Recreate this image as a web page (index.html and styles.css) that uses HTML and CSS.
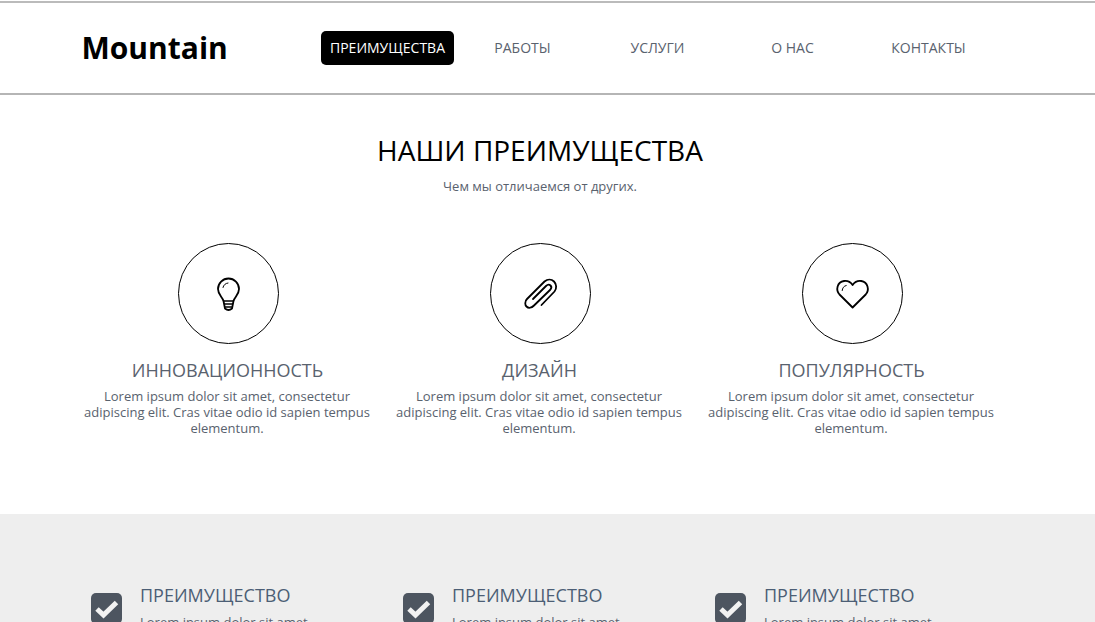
FILE: index.html
```html
<!DOCTYPE html>
<html lang="ru">
<head>
  <meta charset="UTF-8">
  <meta name="viewport" content="width=device-width, initial-scale=1.0">
  <title>Mountain</title>
  <link rel="stylesheet" href="styles.css">
</head>
<body>
  <header class="header">
    <div class="header-inner">
      <a href="#" class="logo">Mountain</a>
      <nav class="nav">
        <a href="#" class="nav-link active">ПРЕИМУЩЕСТВА</a>
        <a href="#" class="nav-link">РАБОТЫ</a>
        <a href="#" class="nav-link">УСЛУГИ</a>
        <a href="#" class="nav-link">О НАС</a>
        <a href="#" class="nav-link">КОНТАКТЫ</a>
      </nav>
    </div>
  </header>

  <section class="about">
    <h1 class="about-title">НАШИ ПРЕИМУЩЕСТВА</h1>
    <p class="about-sub">Чем мы отличаемся от других.</p>
    <div class="cols">
      <div class="col">
        <div class="circle">
          <svg class="icon" width="40" height="40" viewBox="0 0 40 40" fill="none" stroke="#000" stroke-width="1.800" stroke-linecap="round" stroke-linejoin="round">
            <path d="M15.500 27 C14.500 23 10 21 10 15 A10.500 10.500 0 0 1 31 15 C31 21 26.500 23 25.500 27 L24 34.500 Q20.500 37.500 17 34.500 Z"/>
            <path d="M15.500 27 H25.500 M16.500 30 H24.500 M17.500 33 H23.500" stroke-width="1.300"/>
            <path d="M15 13.500 C15.500 11 17.500 9.300 20 9" stroke-width="1"/>
          </svg>
        </div>
        <h3 class="col-title">ИННОВАЦИОННОСТЬ</h3>
        <p class="col-text">Lorem ipsum dolor sit amet, consectetur adipiscing elit. Cras vitae odio id sapien tempus elementum.</p>
      </div>
      <div class="col">
        <div class="circle">
          <svg class="icon" width="40" height="40" viewBox="0 0 40 40" fill="none" stroke="#000" stroke-width="1.800" stroke-linecap="round" stroke-linejoin="round">
            <path d="M21.500 31 L34.500 17.500 C37 14.500 36.500 10 34 7.500 C31.500 5 27.500 5 24.500 7.500 L7 25 C4.500 27.500 5 31 6.500 32.500 C8.500 34.500 11.500 34 14 31.500 L30 16 C31.500 14.500 31.500 12.500 30.500 11.500 C29.500 10.500 27.500 10.500 26 12 L13 25"/>
          </svg>
        </div>
        <h3 class="col-title">ДИЗАЙН</h3>
        <p class="col-text">Lorem ipsum dolor sit amet, consectetur adipiscing elit. Cras vitae odio id sapien tempus elementum.</p>
      </div>
      <div class="col">
        <div class="circle">
          <svg class="icon" width="40" height="40" viewBox="0 0 40 40" fill="none" stroke="#000" stroke-width="1.800" stroke-linecap="round" stroke-linejoin="round">
            <path d="M20.600 33.500 L7.500 20.500 C3.500 16 5 8 12 7 C15.500 6.500 18.500 8 20.600 11 C22.700 8 25.700 6.500 29.200 7 C36 8 37.700 16 33.700 20.500 Z"/>
            <path d="M10.200 16.500 C10.400 14 11.800 12 14.200 11.500" stroke-width="1"/>
          </svg>
        </div>
        <h3 class="col-title">ПОПУЛЯРНОСТЬ</h3>
        <p class="col-text">Lorem ipsum dolor sit amet, consectetur adipiscing elit. Cras vitae odio id sapien tempus elementum.</p>
      </div>
    </div>
  </section>

  <section class="features">
    <div class="feature-row">
      <div class="feature">
        <div class="check"><svg width="31" height="31" viewBox="0 0 31 31" fill="none" stroke="#f2f2f2" stroke-width="5"><path d="M6 16 L12.500 22 L25.500 9.500"/></svg></div>
        <div class="feature-body">
          <h4 class="feature-title">ПРЕИМУЩЕСТВО</h4>
          <p class="feature-text">Lorem ipsum dolor sit amet</p>
        </div>
      </div>
      <div class="feature">
        <div class="check"><svg width="31" height="31" viewBox="0 0 31 31" fill="none" stroke="#f2f2f2" stroke-width="5"><path d="M6 16 L12.500 22 L25.500 9.500"/></svg></div>
        <div class="feature-body">
          <h4 class="feature-title">ПРЕИМУЩЕСТВО</h4>
          <p class="feature-text">Lorem ipsum dolor sit amet</p>
        </div>
      </div>
      <div class="feature">
        <div class="check"><svg width="31" height="31" viewBox="0 0 31 31" fill="none" stroke="#f2f2f2" stroke-width="5"><path d="M6 16 L12.500 22 L25.500 9.500"/></svg></div>
        <div class="feature-body">
          <h4 class="feature-title">ПРЕИМУЩЕСТВО</h4>
          <p class="feature-text">Lorem ipsum dolor sit amet</p>
        </div>
      </div>
    </div>
  </section>
</body>
</html>
```
FILE: styles.css
```css
* { box-sizing: border-box; margin: 0; padding: 0; }
html, body { height: 100%; overflow: hidden; }
body { background: #fff; color: #59626e; font-family: 'Open Sans', sans-serif; font-size: 13px; line-height: 16px; display: flex; flex-direction: column; }
a { text-decoration: none; }

.header { margin-top: 1px; height: 94px; flex: none; border-top: 2px solid #bbb; border-bottom: 2px solid #b5b5b5; }
.header-inner { display: flex; align-items: center; height: 90px; padding-left: 81.5px; }
.logo { width: 239.5px; font-size: 30px; line-height: 40px; font-weight: 700; color: #000; }
.nav { display: flex; gap: 2px; }
.nav-link { width: 133px; height: 34px; line-height: 34px; border-radius: 5px; text-align: center; font-size: 14px; color: #59626e; }
.nav-link.active { background: #000; color: #fff; }
.nav-link:last-child { margin-left: 1px; }

.about { height: 419px; flex: none; text-align: center; padding-top: 36px; }
.about-title { width: 936px; margin-left: 72px; font-size: 28px; line-height: 38px; font-weight: 400; color: #000; }
.about-sub { width: 936px; margin: 9px 0 0 72px; }
.cols { display: flex; width: 936px; margin: 49px 0 0 72px; }
.col { width: 312px; padding: 0 12px; }
.circle { width: 101px; height: 101px; border: 1px solid #000; border-radius: 50%; margin: 0 auto; display: flex; align-items: center; justify-content: center; }
.col-title { margin: 14px 0 0 -1px; font-size: 18px; line-height: 24px; font-weight: 400; }
.col-text { margin: 6px 1px 0 -1px; }

.features { flex: 1; background: #eee; padding: 71px 0 0 72px; overflow: hidden; }
.feature-row { display: flex; width: 936px; }
.feature { width: 312px; display: flex; padding-left: 19px; }
.check { width: 31px; height: 31px; flex: none; margin-top: 8px; background: #4d5560; border-radius: 5px; }
.feature-body { margin-left: 18px; }
.feature-title { font-size: 18px; line-height: 20px; font-weight: 400; color: #4c5e75; }
.feature-text { margin-top: 9px; }
```
